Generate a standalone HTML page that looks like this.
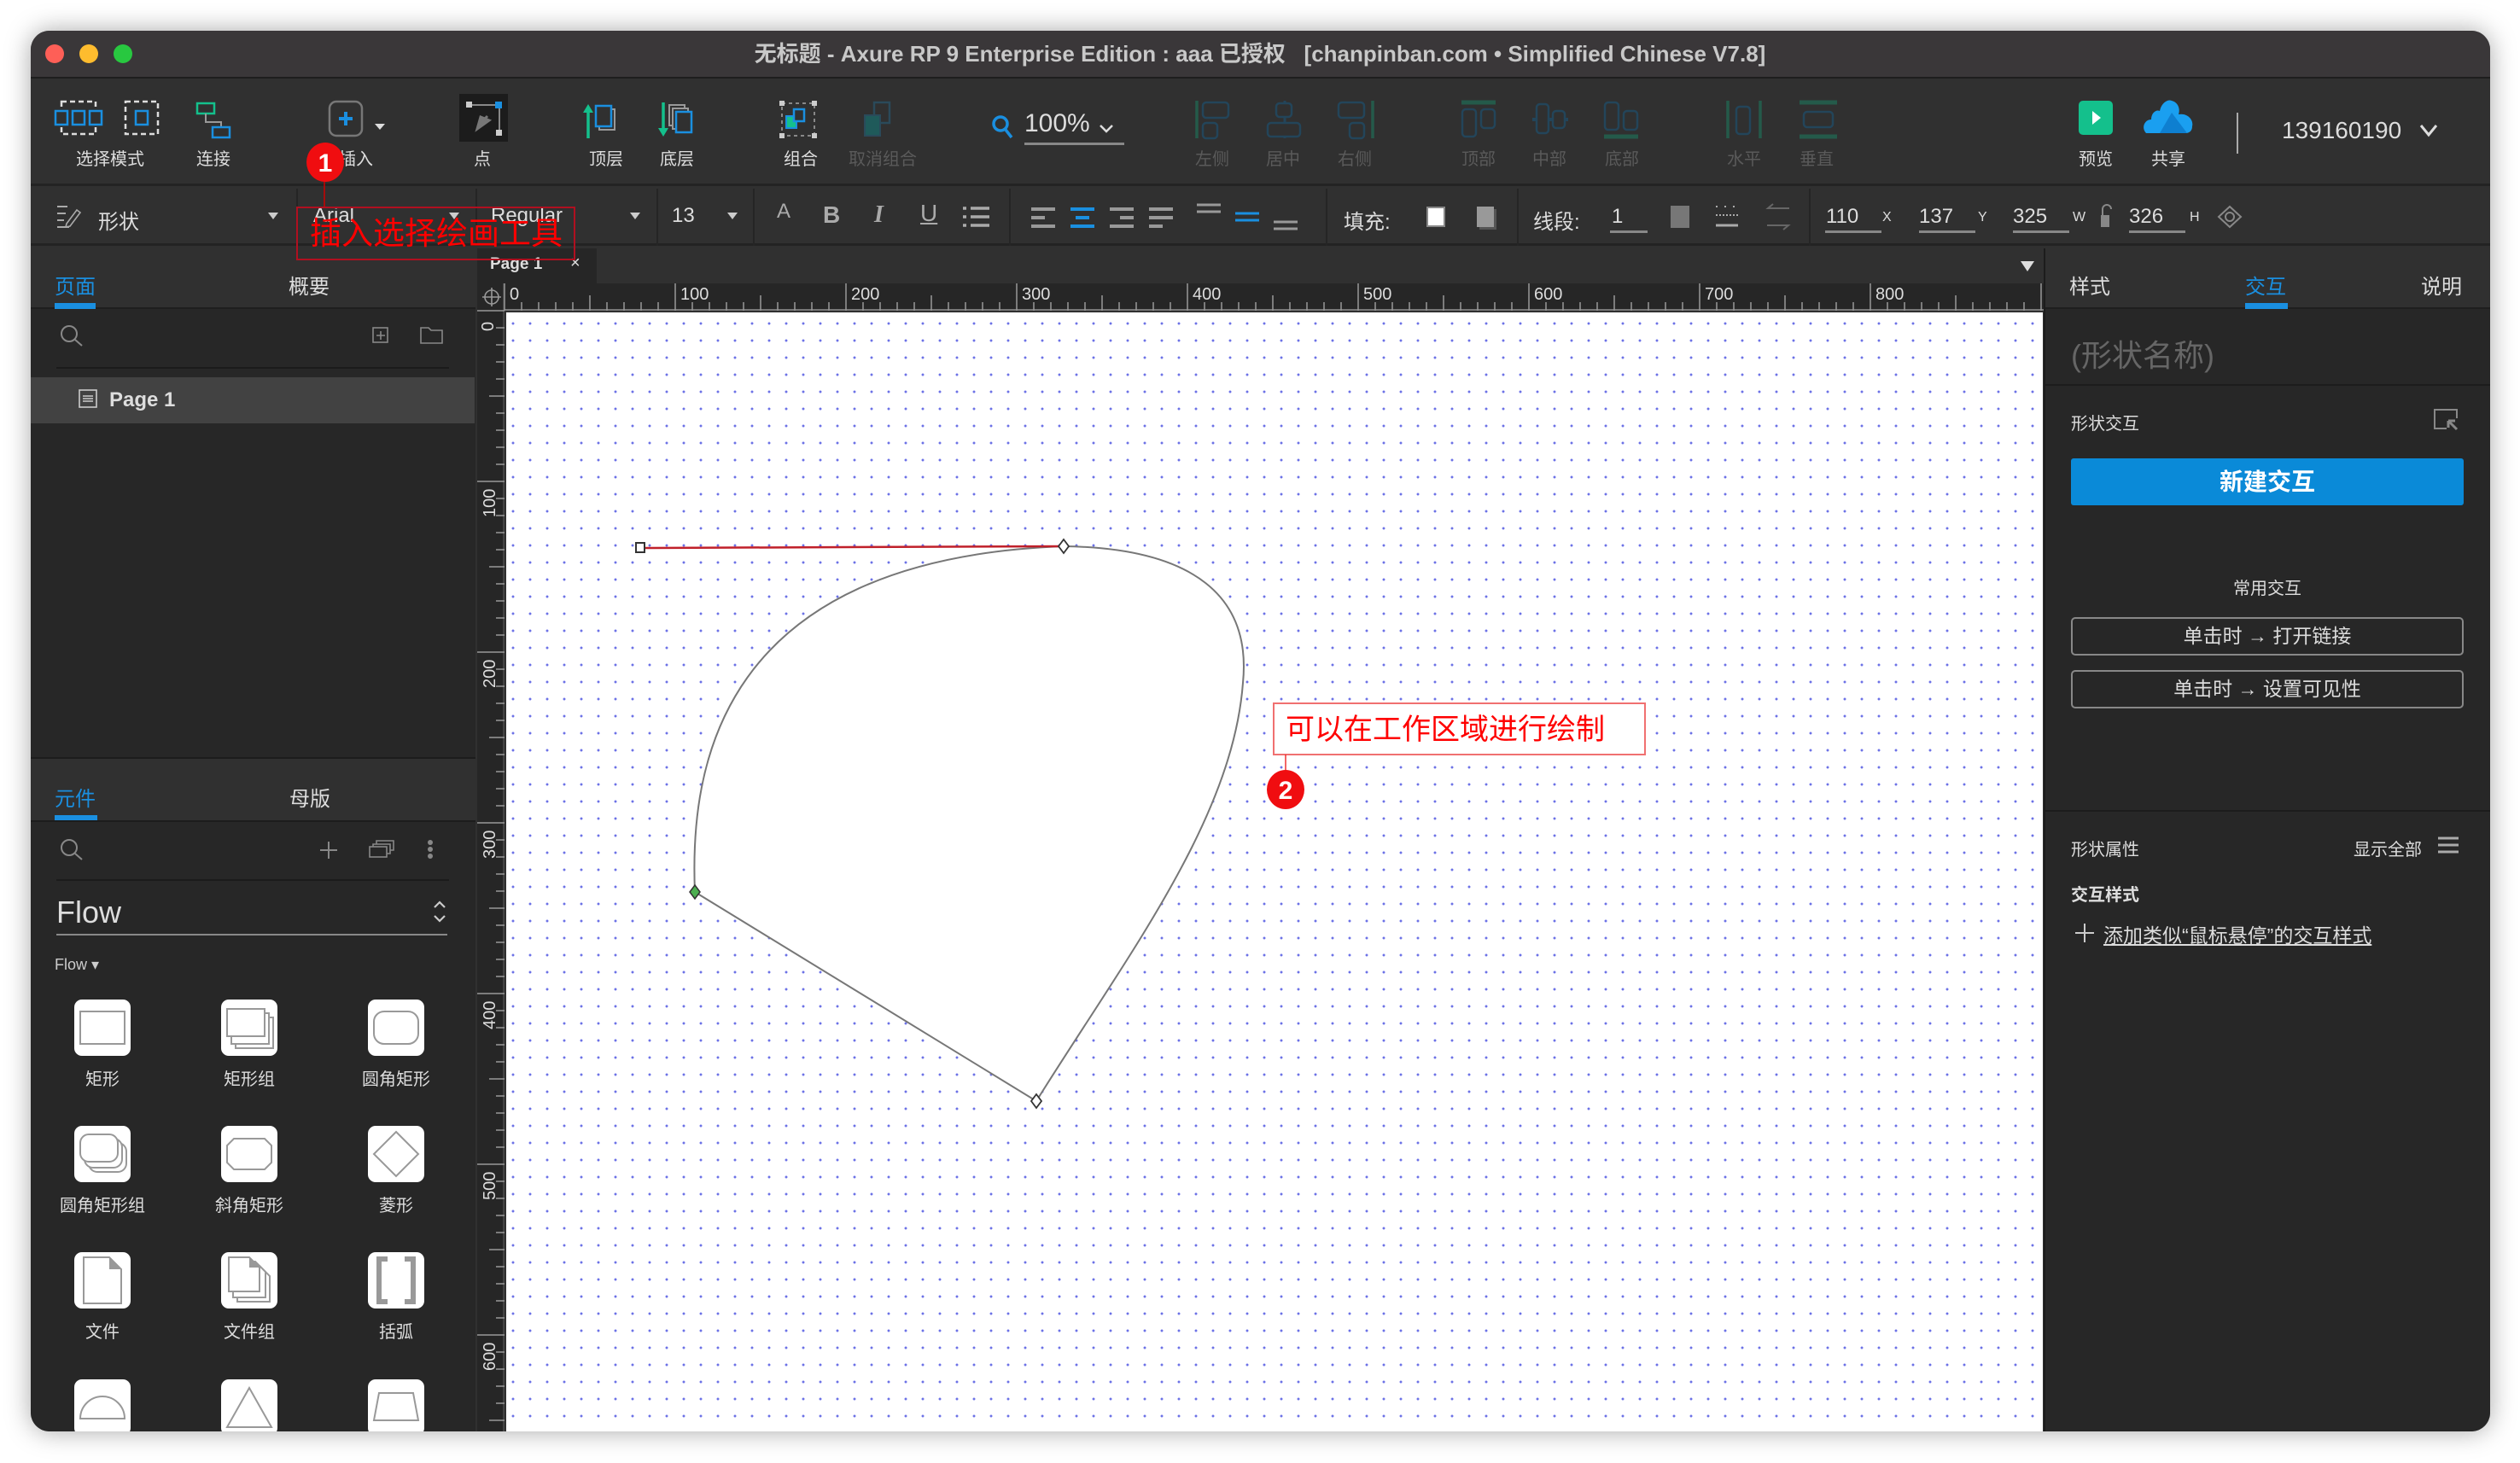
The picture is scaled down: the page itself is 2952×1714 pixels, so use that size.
<!DOCTYPE html>
<html><head><meta charset="utf-8">
<style>
*{margin:0;padding:0;box-sizing:border-box}
body{width:2952px;height:1714px;background:#fff;position:relative;overflow:hidden;font-family:"Liberation Sans","Noto Sans CJK SC",sans-serif;color:#ddd}
#win{position:absolute;left:36px;top:36px;width:2881px;height:1641px;border-radius:22px;overflow:hidden;background:#303030;box-shadow:0 0 30px rgba(0,0,0,.35)}
#in{position:absolute;left:-36px;top:-36px;width:2952px;height:1714px}
.a{position:absolute}
.lb{position:absolute;transform:translateX(-50%);font-size:20px;color:#ddd;white-space:nowrap;top:170px}
.dis{color:#5a5a5a}
.t{position:absolute;white-space:nowrap}
svg{position:absolute;overflow:visible}
.vs{position:absolute;width:2px;background:#252525}
.tile{position:absolute;width:66px;height:66px;background:#fff;border-radius:9px}
.tl{position:absolute;transform:translateX(-50%);font-size:20px;color:#ddd;white-space:nowrap}
</style></head><body>
<div id="win"><div id="in">
<!-- title bar -->
<div class="a" style="left:0;top:36px;width:2952px;height:56px;background:#3a3739;border-bottom:2px solid #1e1e1e"></div>
<div class="a" style="left:53px;top:52px;width:22px;height:22px;border-radius:50%;background:#fe5f57"></div>
<div class="a" style="left:93px;top:52px;width:22px;height:22px;border-radius:50%;background:#febc2e"></div>
<div class="a" style="left:133px;top:52px;width:22px;height:22px;border-radius:50%;background:#28c840"></div>
<div class="t" style="left:0;width:2952px;text-align:center;top:43px;font-size:26px;font-weight:bold;color:#c8c8c8">无标题 - Axure RP 9 Enterprise Edition : aaa 已授权 &nbsp; [chanpinban.com • Simplified Chinese V7.8]</div>

<!-- toolbar 1 -->
<div class="a" style="left:0;top:94px;width:2952px;height:124px;background:#303030;border-bottom:3px solid #232323"></div>
<svg style="left:64px;top:118px" width="58" height="40"><rect x="8" y="1" width="40" height="38" fill="none" stroke="#ddd" stroke-width="2.5" stroke-dasharray="6 4"/><rect x="1" y="12" width="14" height="16" fill="#303030" stroke="#1a8fe0" stroke-width="2.5"/><rect x="21" y="12" width="14" height="16" fill="#303030" stroke="#1a8fe0" stroke-width="2.5"/><rect x="41" y="12" width="14" height="16" fill="#303030" stroke="#1a8fe0" stroke-width="2.5"/></svg>
<svg style="left:146px;top:118px" width="40" height="40"><rect x="1" y="1" width="38" height="38" fill="none" stroke="#ddd" stroke-width="2.5" stroke-dasharray="6 4"/><rect x="13" y="12" width="14" height="16" fill="none" stroke="#1a8fe0" stroke-width="2.5"/></svg>
<svg style="left:230px;top:120px" width="42" height="42"><rect x="1" y="1" width="20" height="12" fill="none" stroke="#14c08c" stroke-width="2.5"/><path d="M11 13v10h18v6" fill="none" stroke="#999" stroke-width="2"/><rect x="19" y="29" width="20" height="12" fill="none" stroke="#1a8fe0" stroke-width="2.5"/></svg>
<div class="lb" style="left:129px">选择模式</div>
<div class="lb" style="left:250px">连接</div>
<svg style="left:385px;top:118px" width="70" height="42"><rect x="1" y="1" width="38" height="40" rx="8" fill="none" stroke="#777" stroke-width="2.5"/><path d="M20 13v16M12 21h16" stroke="#1a8fe0" stroke-width="4"/><path d="M54 27h12l-6 7z" fill="#ddd"/></svg>
<div class="lb" style="left:417px">插入</div>
<div class="a" style="left:538px;top:110px;width:57px;height:56px;background:#1c1c1c"></div>
<svg style="left:545px;top:118px" width="44" height="42"><path d="M5 5h35v35" fill="none" stroke="#888" stroke-width="2"/><rect x="1" y="1" width="7" height="7" fill="#ccc"/><rect x="35" y="1" width="8" height="8" fill="#1a8fe0"/><rect x="36" y="34" width="7" height="7" fill="#ccc"/><path d="M14 33l4-14 10 4z M18 26l8-8" stroke="#777" stroke-width="3" fill="#777"/></svg>
<div class="lb" style="left:565px">点</div>
<svg style="left:682px;top:120px" width="42" height="42"><path d="M7 42V8" stroke="#14c08c" stroke-width="3.5"/><path d="M1 12l6-10 6 10z" fill="#14c08c"/><rect x="20" y="8" width="18" height="24" fill="none" stroke="#999" stroke-width="2"/><rect x="16" y="4" width="18" height="24" fill="#303030" stroke="#1a8fe0" stroke-width="2.5"/></svg>
<svg style="left:770px;top:120px" width="42" height="42"><path d="M7 0v34" stroke="#14c08c" stroke-width="3.5"/><path d="M1 30l6 10 6-10z" fill="#14c08c"/><rect x="14" y="3" width="18" height="24" fill="none" stroke="#999" stroke-width="2"/><rect x="18" y="7" width="18" height="24" fill="#303030" stroke="#999" stroke-width="2"/><rect x="22" y="11" width="18" height="24" fill="#303030" stroke="#1a8fe0" stroke-width="2.5"/></svg>
<div class="lb" style="left:710px">顶层</div>
<div class="lb" style="left:793px">底层</div>
<svg style="left:913px;top:118px" width="44" height="44"><rect x="3" y="3" width="38" height="38" fill="none" stroke="#888" stroke-width="2" stroke-dasharray="4 4"/><rect x="0" y="0" width="6" height="6" fill="#ccc"/><rect x="38" y="0" width="6" height="6" fill="#ccc"/><rect x="0" y="38" width="6" height="6" fill="#ccc"/><rect x="38" y="38" width="6" height="6" fill="#ccc"/><rect x="8" y="18" width="12" height="14" fill="#14c08c" stroke="#1a8fe0" stroke-width="2"/><rect x="17" y="10" width="12" height="14" fill="#303030" stroke="#1a8fe0" stroke-width="2.5"/></svg>
<div class="lb" style="left:938px">组合</div>
<svg style="left:1010px;top:118px" width="44" height="44"><rect x="14" y="2" width="18" height="24" fill="none" stroke="#2a4a5a" stroke-width="2.5"/><rect x="3" y="17" width="18" height="24" fill="#1f5a5a" stroke="#2a4a5a" stroke-width="2"/></svg>
<div class="lb dis" style="left:1034px">取消组合</div>
<svg style="left:1162px;top:135px" width="26" height="30"><circle cx="10" cy="10" r="8" fill="none" stroke="#1a8fe0" stroke-width="3.5"/><path d="M16 17l7 9" stroke="#1a8fe0" stroke-width="3.5"/></svg>
<div class="t" style="left:1200px;top:128px;font-size:30px;color:#ddd">100%</div>
<svg style="left:1288px;top:146px" width="16" height="10"><path d="M1 1l7 7 7-7" fill="none" stroke="#ddd" stroke-width="2.5"/></svg>
<div class="a" style="left:1200px;top:167px;width:117px;height:3px;background:#888"></div>
<!-- align icons (disabled) -->
<svg style="left:1400px;top:118px" width="44" height="44"><path d="M2 0v44" stroke="#245a4a" stroke-width="3.5"/><rect x="9" y="2" width="30" height="18" rx="4" fill="none" stroke="#23455a" stroke-width="2.5"/><rect x="9" y="26" width="17" height="18" rx="4" fill="none" stroke="#23455a" stroke-width="2.5"/></svg>
<svg style="left:1483px;top:118px" width="44" height="44"><path d="M22 0v44" stroke="#23455a" stroke-width="3"/><rect x="12" y="3" width="18" height="16" rx="4" fill="#303030" stroke="#23455a" stroke-width="2.5"/><rect x="2" y="26" width="38" height="16" rx="4" fill="#303030" stroke="#23455a" stroke-width="2.5"/></svg>
<svg style="left:1566px;top:118px" width="44" height="44"><path d="M42 0v44" stroke="#245a4a" stroke-width="3.5"/><rect x="2" y="2" width="30" height="18" rx="4" fill="none" stroke="#23455a" stroke-width="2.5"/><rect x="15" y="26" width="17" height="18" rx="4" fill="none" stroke="#23455a" stroke-width="2.5"/></svg>
<div class="lb dis" style="left:1420px">左侧</div>
<div class="lb dis" style="left:1503px">居中</div>
<div class="lb dis" style="left:1587px">右侧</div>
<svg style="left:1712px;top:118px" width="44" height="44"><path d="M0 2h40" stroke="#245a4a" stroke-width="5"/><rect x="1" y="10" width="16" height="32" rx="4" fill="none" stroke="#23455a" stroke-width="2.5"/><rect x="23" y="10" width="16" height="22" rx="4" fill="none" stroke="#23455a" stroke-width="2.5"/></svg>
<svg style="left:1795px;top:118px" width="44" height="44"><path d="M0 22h42" stroke="#23455a" stroke-width="4"/><rect x="5" y="4" width="14" height="34" rx="4" fill="#303030" stroke="#23455a" stroke-width="2.5"/><rect x="24" y="12" width="14" height="20" rx="4" fill="#303030" stroke="#23455a" stroke-width="2.5"/></svg>
<svg style="left:1879px;top:118px" width="44" height="44"><path d="M0 42h40" stroke="#245a4a" stroke-width="5"/><rect x="1" y="2" width="16" height="32" rx="4" fill="none" stroke="#23455a" stroke-width="2.5"/><rect x="23" y="12" width="16" height="22" rx="4" fill="none" stroke="#23455a" stroke-width="2.5"/></svg>
<div class="lb dis" style="left:1732px">顶部</div>
<div class="lb dis" style="left:1815px">中部</div>
<div class="lb dis" style="left:1900px">底部</div>
<svg style="left:2022px;top:118px" width="44" height="44"><path d="M2 0v44M40 0v44" stroke="#245a4a" stroke-width="3.5"/><rect x="12" y="7" width="16" height="32" rx="4" fill="none" stroke="#23455a" stroke-width="2.5"/></svg>
<svg style="left:2108px;top:118px" width="44" height="44"><path d="M0 2h44M0 42h44" stroke="#245a4a" stroke-width="5"/><rect x="5" y="13" width="34" height="18" rx="4" fill="none" stroke="#23455a" stroke-width="2.5"/></svg>
<div class="lb dis" style="left:2043px">水平</div>
<div class="lb dis" style="left:2128px">垂直</div>
<svg style="left:2435px;top:118px" width="40" height="40"><rect x="0" y="0" width="40" height="40" rx="5" fill="#14c08c"/><path d="M16 12l10 8-10 8z" fill="#fff"/></svg>
<svg style="left:2510px;top:116px" width="62" height="42"><path d="M4 40 C-2 34 2 24 10 24 C10 16 16 12 20 14 C22 4 30 0 34 2 C42 4 44 12 42 18 C52 16 60 24 58 32 C58 38 54 40 50 40 Z" fill="#1a9ff0"/><path d="M20 40l14-24 18 24z" fill="#0e7fd0"/></svg>
<div class="lb" style="left:2455px">预览</div>
<div class="lb" style="left:2540px">共享</div>
<div class="a" style="left:2620px;top:132px;width:2px;height:48px;background:#aaa"></div>
<div class="t" style="left:2673px;top:137px;font-size:28px;color:#ddd">139160190</div>
<svg style="left:2835px;top:146px" width="20" height="14"><path d="M1 1l9 11 9-11" fill="none" stroke="#ddd" stroke-width="3"/></svg>

<!-- toolbar 2 -->
<div class="a" style="left:0;top:221px;width:2952px;height:67px;background:#303030;border-bottom:3px solid #232323"></div>
<div class="vs" style="left:347px;top:221px;height:67px"></div>
<div class="vs" style="left:557px;top:221px;height:67px"></div>
<div class="vs" style="left:769px;top:221px;height:67px"></div>
<div class="vs" style="left:882px;top:221px;height:67px"></div>
<div class="vs" style="left:1182px;top:221px;height:67px"></div>
<div class="vs" style="left:1553px;top:221px;height:67px"></div>
<div class="vs" style="left:1777px;top:221px;height:67px"></div>
<div class="vs" style="left:2119px;top:221px;height:67px"></div>
<svg style="left:66px;top:240px" width="30" height="28"><path d="M1 2h12M1 10h10M1 18h8M1 26h14" stroke="#aaa" stroke-width="2"/><path d="M12 22l12-16 4 3-12 16-5 1z" fill="none" stroke="#aaa" stroke-width="1.6"/></svg>
<div class="t" style="left:115px;top:240px;font-size:24px">形状</div>
<svg style="left:314px;top:249px" width="12" height="8"><path d="M0 0h12l-6 8z" fill="#ccc"/></svg>
<div class="t" style="left:367px;top:239px;font-size:24px">Arial</div>
<svg style="left:526px;top:249px" width="12" height="8"><path d="M0 0h12l-6 8z" fill="#ccc"/></svg>
<div class="t" style="left:575px;top:239px;font-size:24px">Regular</div>
<svg style="left:738px;top:249px" width="12" height="8"><path d="M0 0h12l-6 8z" fill="#ccc"/></svg>
<div class="t" style="left:787px;top:239px;font-size:24px">13</div>
<svg style="left:852px;top:249px" width="12" height="8"><path d="M0 0h12l-6 8z" fill="#ccc"/></svg>
<div class="t" style="left:910px;top:234px;font-size:24px;color:#aaa">A</div>
<div class="t" style="left:964px;top:236px;font-size:28px;font-weight:bold;color:#aaa">B</div>
<div class="t" style="left:1024px;top:236px;font-size:28px;font-style:italic;font-family:'Liberation Serif',serif;font-weight:bold;color:#aaa">I</div>
<div class="t" style="left:1078px;top:234px;font-size:28px;text-decoration:underline;color:#aaa">U</div>
<svg style="left:1128px;top:242px" width="32" height="26"><path d="M0 2h4M0 12h4M0 22h4M9 2h22M9 12h22M9 22h22" stroke="#aaa" stroke-width="3.5"/></svg>
<svg style="left:1208px;top:243px" width="170" height="22"><g stroke="#999" stroke-width="4"><path d="M0 2h28M0 12h16M0 22h28"/></g><g stroke="#1a8fe0" stroke-width="4"><path d="M46 2h28M52 12h16M46 22h28"/></g><g stroke="#999" stroke-width="4"><path d="M92 2h28M104 12h16M92 22h28M138 2h28M138 12h28M138 22h16"/></g></svg>
<svg style="left:1402px;top:238px" width="120" height="30"><path d="M0 2h28M0 10h28" stroke="#999" stroke-width="3"/><path d="M45 12h28M45 20h28" stroke="#1a8fe0" stroke-width="3"/><path d="M90 22h28M90 30h28" stroke="#999" stroke-width="3"/></svg>
<div class="t" style="left:1574px;top:240px;font-size:24px">填充:</div>
<div class="a" style="left:1671px;top:242px;width:22px;height:24px;background:#fff;border:2px solid #888"></div>
<div class="a" style="left:1730px;top:242px;width:20px;height:24px;background:#999;box-shadow:3px 3px 0 #555"></div>
<div class="t" style="left:1796px;top:240px;font-size:24px">线段:</div>
<div class="t" style="left:1888px;top:240px;font-size:24px">1</div>
<div class="a" style="left:1886px;top:270px;width:44px;height:3px;background:#888"></div>
<div class="a" style="left:1957px;top:241px;width:22px;height:26px;background:#777"></div>
<svg style="left:2010px;top:240px" width="30" height="28"><path d="M0 2h4M10 2h4M20 2h4M0 12h26" stroke="#aaa" stroke-width="2" stroke-dasharray="2 2"/><path d="M0 24h26" stroke="#aaa" stroke-width="3"/></svg>
<svg style="left:2068px;top:238px" width="30" height="32"><path d="M28 6H3l6-5M2 26h25l-6 5" fill="none" stroke="#666" stroke-width="2"/></svg>
<div class="t" style="left:2139px;top:240px;font-size:24px">110</div><div class="a" style="left:2138px;top:270px;width:66px;height:3px;background:#888"></div>
<div class="t" style="left:2205px;top:246px;font-size:16px">X</div>
<div class="t" style="left:2248px;top:240px;font-size:24px">137</div><div class="a" style="left:2248px;top:270px;width:66px;height:3px;background:#888"></div>
<div class="t" style="left:2317px;top:246px;font-size:16px">Y</div>
<div class="t" style="left:2358px;top:240px;font-size:24px">325</div><div class="a" style="left:2358px;top:270px;width:66px;height:3px;background:#888"></div>
<div class="t" style="left:2428px;top:246px;font-size:16px">W</div>
<svg style="left:2460px;top:238px" width="16" height="30"><path d="M3 14V7a5 5 0 0 1 10 0" fill="none" stroke="#888" stroke-width="2"/><rect x="1" y="14" width="10" height="14" fill="#888"/></svg>
<div class="t" style="left:2494px;top:240px;font-size:24px">326</div><div class="a" style="left:2494px;top:270px;width:66px;height:3px;background:#888"></div>
<div class="t" style="left:2565px;top:246px;font-size:16px">H</div>
<svg style="left:2597px;top:240px" width="30" height="28"><path d="M15 2 28 14 15 26 2 14Z" fill="none" stroke="#888" stroke-width="2"/><circle cx="15" cy="14" r="5" fill="none" stroke="#888" stroke-width="2"/></svg>

<!-- left panel -->
<div class="a" style="left:0;top:291px;width:557px;height:1400px;background:#272727"></div>
<div class="a" style="left:0;top:291px;width:557px;height:71px;background:#303030;border-bottom:2px solid #1e1e1e"></div>
<div class="t" style="left:64px;top:316px;font-size:24px;color:#1a8fe0">页面</div>
<div class="a" style="left:64px;top:355px;width:48px;height:7px;background:#1a8fe0"></div>
<div class="t" style="left:338px;top:316px;font-size:24px">概要</div>
<svg style="left:70px;top:380px" width="30" height="28"><circle cx="11" cy="11" r="9" fill="none" stroke="#888" stroke-width="2"/><path d="M18 18l8 7" stroke="#888" stroke-width="2"/></svg>
<svg style="left:436px;top:383px" width="20" height="20"><rect x="1" y="1" width="17" height="17" fill="none" stroke="#888" stroke-width="1.6"/><path d="M10 5v10M5 10h10" stroke="#888" stroke-width="1.6"/></svg>
<svg style="left:492px;top:383px" width="28" height="20"><path d="M1 1h9l3 3h13v15H1z" fill="none" stroke="#888" stroke-width="1.6"/></svg>
<div class="a" style="left:66px;top:430px;width:460px;height:2px;background:#1b1b1b"></div>
<div class="a" style="left:36px;top:442px;width:520px;height:54px;background:#424242"></div>
<svg style="left:92px;top:456px" width="24" height="24"><rect x="1" y="1" width="20" height="20" fill="none" stroke="#ccc" stroke-width="1.6"/><path d="M5 8h12M5 11h12M5 14h12" stroke="#ccc" stroke-width="1.6"/></svg>
<div class="t" style="left:128px;top:455px;font-size:24px;font-weight:bold;color:#ddd">Page 1</div>
<div class="a" style="left:0;top:887px;width:557px;height:76px;background:#303030;border-top:2px solid #1c1c1c;border-bottom:2px solid #1c1c1c"></div>
<div class="t" style="left:64px;top:916px;font-size:24px;color:#1a8fe0">元件</div>
<div class="a" style="left:64px;top:955px;width:50px;height:6px;background:#1a8fe0"></div>
<div class="t" style="left:339px;top:916px;font-size:24px">母版</div>
<svg style="left:70px;top:982px" width="30" height="28"><circle cx="11" cy="11" r="9" fill="none" stroke="#888" stroke-width="2"/><path d="M18 18l8 7" stroke="#888" stroke-width="2"/></svg>
<svg style="left:374px;top:985px" width="22" height="22"><path d="M11 1v20M1 11h20" stroke="#888" stroke-width="2"/></svg>
<svg style="left:432px;top:984px" width="30" height="22"><rect x="1" y="8" width="20" height="12" fill="none" stroke="#888" stroke-width="1.6"/><path d="M5 8V5h20v11h-4M9 5V1h20v11h-4" fill="none" stroke="#888" stroke-width="1.6"/></svg>
<svg style="left:499px;top:984px" width="10" height="24"><circle cx="5" cy="3" r="3" fill="#888"/><circle cx="5" cy="11" r="3" fill="#888"/><circle cx="5" cy="19" r="3" fill="#888"/></svg>
<div class="a" style="left:66px;top:1030px;width:460px;height:2px;background:#1b1b1b"></div>
<div class="t" style="left:66px;top:1048px;font-size:36px;color:#ddd">Flow</div>
<svg style="left:508px;top:1055px" width="14" height="26"><path d="M1 8l6-6 6 6M1 18l6 6 6-6" fill="none" stroke="#ccc" stroke-width="2.2"/></svg>
<div class="a" style="left:66px;top:1094px;width:458px;height:2px;background:#888"></div>
<div class="t" style="left:64px;top:1120px;font-size:18px;color:#ccc">Flow ▾</div>

<div class="tile" style="left:87px;top:1171px"></div><svg style="left:92px;top:1183px" width="56" height="42"><rect x="2" y="2" width="52" height="38" fill="none" stroke="#999" stroke-width="2"/></svg>
<div class="tile" style="left:259px;top:1171px"></div><svg style="left:264px;top:1180px" width="58" height="50"><rect x="12" y="12" width="44" height="36" fill="#fff" stroke="#999" stroke-width="2"/><rect x="7" y="7" width="44" height="36" fill="#fff" stroke="#999" stroke-width="2"/><rect x="2" y="2" width="44" height="32" fill="#fff" stroke="#999" stroke-width="2"/></svg>
<div class="tile" style="left:431px;top:1171px"></div><svg style="left:436px;top:1183px" width="56" height="42"><rect x="2" y="2" width="52" height="38" rx="12" fill="none" stroke="#999" stroke-width="2"/></svg>
<div class="tl" style="left:120px;top:1248px">矩形</div><div class="tl" style="left:292px;top:1248px">矩形组</div><div class="tl" style="left:464px;top:1248px">圆角矩形</div>

<div class="tile" style="left:87px;top:1319px"></div><svg style="left:92px;top:1327px" width="58" height="50"><rect x="12" y="12" width="44" height="34" rx="10" fill="#fff" stroke="#999" stroke-width="2"/><rect x="7" y="7" width="44" height="34" rx="10" fill="#fff" stroke="#999" stroke-width="2"/><rect x="2" y="2" width="44" height="32" rx="10" fill="#fff" stroke="#999" stroke-width="2"/></svg>
<div class="tile" style="left:259px;top:1319px"></div><svg style="left:264px;top:1332px" width="56" height="40"><path d="M10 2h36l8 8v20l-8 8H10l-8-8V10z" fill="none" stroke="#999" stroke-width="2"/></svg>
<div class="tile" style="left:431px;top:1319px"></div><svg style="left:436px;top:1324px" width="56" height="56"><path d="M28 2 54 28 28 54 2 28Z" fill="none" stroke="#999" stroke-width="2"/></svg>
<div class="tl" style="left:120px;top:1396px">圆角矩形组</div><div class="tl" style="left:292px;top:1396px">斜角矩形</div><div class="tl" style="left:464px;top:1396px">菱形</div>

<div class="tile" style="left:87px;top:1467px"></div><svg style="left:96px;top:1471px" width="50" height="58"><path d="M2 2h30l14 14v40H2z" fill="none" stroke="#999" stroke-width="2"/><path d="M32 2v14h14z" fill="#999"/></svg>
<div class="tile" style="left:259px;top:1467px"></div><svg style="left:266px;top:1471px" width="54" height="58"><path d="M12 12h26l12 12v30H12z" fill="#fff" stroke="#999" stroke-width="2"/><path d="M7 7h26l12 12v30H7z" fill="#fff" stroke="#999" stroke-width="2"/><path d="M2 2h24l12 12v28H2z" fill="#fff" stroke="#999" stroke-width="2"/><path d="M26 2v12h12z" fill="#999"/></svg>
<div class="tile" style="left:431px;top:1467px"></div><svg style="left:440px;top:1472px" width="48" height="56"><path d="M14 3H4v50h10M34 3h10v50H34" fill="none" stroke="#999" stroke-width="6"/></svg>
<div class="tl" style="left:120px;top:1544px">文件</div><div class="tl" style="left:292px;top:1544px">文件组</div><div class="tl" style="left:464px;top:1544px">括弧</div>

<div class="tile" style="left:87px;top:1616px"></div><svg style="left:92px;top:1634px" width="56" height="30"><path d="M2 28A26 26 0 0 1 54 28Z" fill="none" stroke="#999" stroke-width="2"/></svg>
<div class="tile" style="left:259px;top:1616px"></div><svg style="left:264px;top:1624px" width="56" height="50"><path d="M28 2 54 48H2Z" fill="none" stroke="#999" stroke-width="2"/></svg>
<div class="tile" style="left:431px;top:1616px"></div><svg style="left:436px;top:1630px" width="56" height="36"><path d="M8 2h40l6 32H2Z" fill="none" stroke="#999" stroke-width="2"/></svg>

<!-- canvas header -->
<div class="a" style="left:559px;top:291px;width:1835px;height:41px;background:#303030"></div>
<div class="a" style="left:559px;top:291px;width:140px;height:41px;background:#262626"></div>
<div class="t" style="left:574px;top:299px;font-size:19px;font-weight:bold">Page 1</div>
<div class="t" style="left:668px;top:297px;font-size:20px">×</div>
<svg style="left:2367px;top:306px" width="16" height="12"><path d="M0 0h16l-8 12z" fill="#ddd"/></svg>
<!-- rulers -->
<div class="a" style="left:559px;top:332px;width:1835px;height:32px;background:#262626;border-bottom:2px solid #777"></div>
<div class="a" style="left:559px;top:332px;width:32px;height:1360px;background:#262626;border-right:2px solid #444"></div>
<svg style="left:565px;top:337px" width="22" height="22"><circle cx="11" cy="11" r="8" fill="none" stroke="#999" stroke-width="1.6"/><path d="M11 0v22M0 11h22" stroke="#999" stroke-width="1.6"/></svg>
<svg style="left:591px;top:332px" width="1800" height="32" id="hr"></svg>
<svg style="left:559px;top:364px" width="32" height="1320" id="vr"></svg>
<div class="t" style="left:597px;top:334px;font-size:20px">0</div>
<div class="t" style="left:797px;top:334px;font-size:20px">100</div>
<div class="t" style="left:997px;top:334px;font-size:20px">200</div>
<div class="t" style="left:1197px;top:334px;font-size:20px">300</div>
<div class="t" style="left:1397px;top:334px;font-size:20px">400</div>
<div class="t" style="left:1597px;top:334px;font-size:20px">500</div>
<div class="t" style="left:1797px;top:334px;font-size:20px">600</div>
<div class="t" style="left:1997px;top:334px;font-size:20px">700</div>
<div class="t" style="left:2197px;top:334px;font-size:20px">800</div>
<div class="t" style="left:561px;font-size:20px;transform:rotate(-90deg);transform-origin:left top;top:388px">0</div>
<div class="t" style="left:563px;top:606px;font-size:20px;transform:rotate(-90deg);transform-origin:left top">100</div>
<div class="t" style="left:563px;top:806px;font-size:20px;transform:rotate(-90deg);transform-origin:left top">200</div>
<div class="t" style="left:563px;top:1006px;font-size:20px;transform:rotate(-90deg);transform-origin:left top">300</div>
<div class="t" style="left:563px;top:1206px;font-size:20px;transform:rotate(-90deg);transform-origin:left top">400</div>
<div class="t" style="left:563px;top:1406px;font-size:20px;transform:rotate(-90deg);transform-origin:left top">500</div>
<div class="t" style="left:563px;top:1606px;font-size:20px;transform:rotate(-90deg);transform-origin:left top">600</div>
<!-- canvas -->
<div class="a" style="left:593px;top:366px;width:1800px;height:1320px;background-color:#fff;background-image:radial-gradient(circle,#6c72e6 1.3px,transparent 1.6px);background-size:20px 20px;background-position:-2px 3px"></div>
<svg style="left:0;top:0" width="2952" height="1714">
<path d="M1246 640 C1400 642 1466 700 1456 800 C1444 960 1320 1120 1214 1290 L814 1045 C808 900 840 655 1246 640 Z" fill="#fff" stroke="#777" stroke-width="2"/>
<path d="M750 642 L1246 640" stroke="#c0202a" stroke-width="2.5"/>
<rect x="745" y="636" width="10" height="11" fill="#fff" stroke="#333" stroke-width="2"/>
<path d="M1246 632 L1252 640 1246 648 1240 640Z" fill="#fff" stroke="#333" stroke-width="1.8"/>
<path d="M814 1037 L820 1045 814 1053 808 1045Z" fill="#4caf50" stroke="#333" stroke-width="1.5"/>
<path d="M1214 1282 L1220 1290 1214 1298 1208 1290Z" fill="#fff" stroke="#333" stroke-width="1.8"/>
<rect x="1492" y="824" width="435" height="60" fill="#fff" stroke="#f07070" stroke-width="2"/>
<path d="M1506 884 V905" stroke="#e33" stroke-width="1.5"/>
<ellipse cx="1506" cy="925" rx="22" ry="23" fill="#f00d10"/>
<text x="1506" y="936" font-size="30" font-weight="bold" fill="#fff" text-anchor="middle" font-family="Liberation Sans">2</text>
<text x="1506" y="866" font-size="34" fill="#f00" font-family="Liberation Sans, Noto Sans CJK SC, sans-serif">可以在工作区域进行绘制</text>
<!-- annotation 1 -->
<path d="M380 213 V243" stroke="#c00" stroke-width="1.5"/>
<rect x="348" y="243" width="325" height="61" fill="none" stroke="#b01020" stroke-width="2"/>
<ellipse cx="381" cy="190" rx="22" ry="23" fill="#f00d10"/>
<text x="381" y="201" font-size="30" font-weight="bold" fill="#fff" text-anchor="middle" font-family="Liberation Sans">1</text>
<text x="363" y="286" font-size="37" fill="#f00" font-family="Liberation Sans, Noto Sans CJK SC, sans-serif">插入选择绘画工具</text>
</svg>

<!-- right panel -->
<div class="a" style="left:2394px;top:291px;width:560px;height:1400px;background:#272727;border-left:2px solid #1c1c1c"></div>
<div class="a" style="left:2396px;top:291px;width:560px;height:71px;background:#303030;border-bottom:2px solid #1e1e1e"></div>
<div class="t" style="left:2424px;top:316px;font-size:24px">样式</div>
<div class="t" style="left:2630px;top:316px;font-size:24px;color:#1a8fe0">交互</div>
<div class="a" style="left:2630px;top:355px;width:50px;height:7px;background:#1a8fe0"></div>
<div class="t" style="left:2836px;top:316px;font-size:24px">说明</div>
<div class="t" style="left:2426px;top:388px;font-size:36px;color:#666">(形状名称)</div>
<div class="a" style="left:2396px;top:450px;width:560px;height:2px;background:#1c1c1c"></div>
<div class="t" style="left:2426px;top:480px;font-size:20px">形状交互</div>
<svg style="left:2850px;top:478px" width="30" height="26"><path d="M16 2H2v22h14" fill="none" stroke="#888" stroke-width="2"/><path d="M2 2h26v10" fill="none" stroke="#888" stroke-width="2"/><path d="M28 25L18 15M18 15v8M18 15h8" stroke="#888" stroke-width="3"/></svg>
<div class="a" style="left:2426px;top:537px;width:460px;height:55px;background:#0a8ad8;border-radius:3px;color:#fff;font-size:28px;font-weight:bold;text-align:center;line-height:55px">新建交互</div>
<div class="t" style="left:2396px;width:520px;text-align:center;top:673px;font-size:20px">常用交互</div>
<div class="a" style="left:2426px;top:723px;width:460px;height:45px;border:2px solid #888;border-radius:5px;text-align:center;line-height:41px;font-size:23px">单击时 → 打开链接</div>
<div class="a" style="left:2426px;top:785px;width:460px;height:45px;border:2px solid #888;border-radius:5px;text-align:center;line-height:41px;font-size:23px">单击时 → 设置可见性</div>
<div class="a" style="left:2396px;top:949px;width:560px;height:2px;background:#1c1c1c"></div>
<div class="t" style="left:2426px;top:979px;font-size:20px">形状属性</div>
<div class="t" style="left:2757px;top:979px;font-size:20px">显示全部</div>
<svg style="left:2856px;top:980px" width="24" height="20"><path d="M0 2h24M0 10h24M0 18h24" stroke="#aaa" stroke-width="3"/></svg>
<div class="t" style="left:2426px;top:1032px;font-size:20px;font-weight:bold">交互样式</div>
<svg style="left:2430px;top:1081px" width="24" height="24"><path d="M12 1v22M1 12h22" stroke="#ccc" stroke-width="2"/></svg>
<div class="t" style="left:2464px;top:1077px;font-size:23px;text-decoration:underline">添加类似“鼠标悬停”的交互样式</div>
</div></div>
<script>
(function(){var h=document.getElementById('hr'),s='';for(var i=0;i<=90;i++){var x=i*20;var L=(i%10==0)?32:(i%5==0?18:10);s+='<path d="M'+x+' '+(32-L)+'V32" stroke="#999" stroke-width="1.5"/>';}h.innerHTML=s;
var v=document.getElementById('vr');s='';for(i=0;i<=66;i++){var y=i*20;L=(i%10==0)?32:(i%5==0?18:10);s+='<path d="M'+(32-L)+' '+y+'H32" stroke="#999" stroke-width="1.5"/>';}v.innerHTML=s;})();
</script>
</body></html>
